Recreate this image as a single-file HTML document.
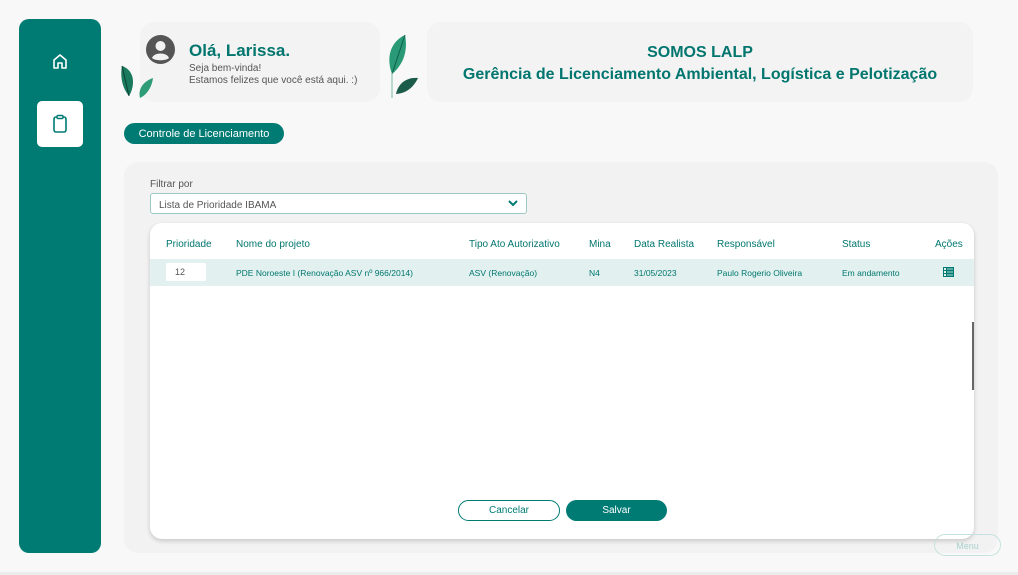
<!DOCTYPE html>
<html><head><meta charset="utf-8"><style>
*{margin:0;padding:0;box-sizing:border-box}
body{width:1018px;height:575px;background:#f8f8f8;font-family:"Liberation Sans",sans-serif;position:relative;overflow:hidden;color:#007a72}
.abs{position:absolute}
.side{left:19px;top:19px;width:82px;height:534px;background:#007b73;border-radius:10px}
.sel{left:37px;top:101px;width:46px;height:46px;background:#fff;border-radius:5px}
.card{background:#f3f3f3;border-radius:14px}
.btn{background:#007b73;color:#fff;border-radius:12px;font-size:11px;text-align:center}
</style></head><body>
<div class="abs" style="left:0;top:572px;width:1018px;height:3px;background:#ececec"></div>
<div class="abs side"></div>
<svg class="abs" style="left:51px;top:52px" width="18" height="18" viewBox="0 0 18 18"><path d="M3 8 L9 3 L15 8 V16 H11 V11 H7 V16 H3 Z" fill="none" stroke="#fff" stroke-width="1.6" stroke-linejoin="round"/></svg>
<div class="abs sel"></div>
<svg class="abs" style="left:51px;top:114px" width="18" height="20" viewBox="0 0 18 20"><rect x="3" y="3" width="12" height="15" rx="2" fill="none" stroke="#007b73" stroke-width="1.6"/><rect x="6" y="1.5" width="6" height="3" rx="1" fill="#fff" stroke="#007b73" stroke-width="1.4"/></svg>

<div class="abs card" style="left:140px;top:22px;width:240px;height:80px"></div>
<svg class="abs" style="left:146px;top:35px" width="29" height="29" viewBox="0 0 29 29"><circle cx="14.5" cy="14.5" r="14.5" fill="#555"/><circle cx="14.5" cy="11" r="5" fill="#f2f2f2"/><path d="M6 23 C8 17 21 17 23 23 C20 26 9 26 6 23Z" fill="#f2f2f2"/></svg>
<div class="abs" style="left:189px;top:41px;font-size:17px;font-weight:bold;color:#00766e">Olá, Larissa.</div>
<div class="abs" style="left:189px;top:63px;font-size:10px;color:#555;line-height:12px">Seja bem-vinda!<br>Estamos felizes que você está aqui. :)</div>
<svg class="abs" style="left:120px;top:62px" width="36" height="38" viewBox="0 0 36 38"><path d="M2 4 C14 8 16 22 9 34 C2 26 0 14 2 4Z" fill="#1a7a5e"/><path d="M2 4 L9 34" stroke="#0c3f34" stroke-width="1"/><path d="M33 16 C22 20 18 28 20 36 C28 32 32 24 33 16Z" fill="#2f9c78"/></svg>
<svg class="abs" style="left:380px;top:34px" width="40" height="64" viewBox="0 0 40 64"><path d="M25 1 C10 8 6 24 12 40 C24 30 28 16 25 1Z" fill="#2a9a76"/><path d="M25 1 L12 40" stroke="#0d5e4a"/><path d="M12 38 V64" stroke="#5aa890" stroke-width="0.8"/><path d="M38 44 C26 43 18 50 16 60 C28 59 34 52 38 44Z" fill="#1a5b4a"/></svg>

<div class="abs card" style="left:427px;top:22px;width:546px;height:80px"></div>
<div class="abs" style="left:427px;top:42px;width:546px;text-align:center;font-size:16px;font-weight:bold;color:#00766e;line-height:22px">SOMOS LALP<br>Gerência de Licenciamento Ambiental, Logística e Pelotização</div>

<div class="abs btn" style="left:124px;top:123px;width:160px;height:21px;line-height:23px">Controle de Licenciamento</div>

<div class="abs card" style="left:124px;top:162px;width:874px;height:391px;background:#f2f2f2"></div>
<div class="abs" style="left:150px;top:179px;font-size:10px;color:#555">Filtrar por</div>
<div class="abs" style="left:150px;top:193px;width:377px;height:21px;background:#fff;border:1px solid #9dc9c4;border-radius:3px;font-size:10px;color:#555;padding:6px 8px 0">Lista de Prioridade IBAMA</div>
<svg class="abs" style="left:508px;top:199px" width="10" height="8" viewBox="0 0 10 8"><path d="M1 2 L5 6 L9 2" stroke="#007b73" stroke-width="2" fill="none"/></svg>

<div class="abs" style="left:150px;top:223px;width:824px;height:316px;background:#fff;border-radius:12px;box-shadow:0 2px 5px rgba(0,0,0,.18)"></div>
<div class="abs" style="left:150px;top:259px;width:824px;height:27px;background:#e2f1ef"></div>
<div class="abs" style="left:972px;top:322px;width:2px;height:68px;background:#666"></div>
<div class="abs" style="top:239px;left:0;width:1018px;font-size:10px;color:#00766e">
<span class="abs" style="left:166px">Prioridade</span><span class="abs" style="left:236px">Nome do projeto</span><span class="abs" style="left:469px">Tipo Ato Autorizativo</span><span class="abs" style="left:589px">Mina</span><span class="abs" style="left:634px">Data Realista</span><span class="abs" style="left:717px">Responsável</span><span class="abs" style="left:842px">Status</span><span class="abs" style="left:935px">Ações</span>
</div>
<div class="abs" style="left:166px;top:263px;width:40px;height:18px;background:#fff;border-radius:2px;font-size:9px;color:#555;padding:4px 9px">12</div>
<div class="abs" style="top:268px;left:0;width:1018px;font-size:8.5px;color:#00766e">
<span class="abs" style="left:236px;white-space:nowrap">PDE Noroeste I (Renovação ASV nº 966/2014)</span><span class="abs" style="left:469px;white-space:nowrap">ASV (Renovação)</span><span class="abs" style="left:589px">N4</span><span class="abs" style="left:634px">31/05/2023</span><span class="abs" style="left:717px;white-space:nowrap">Paulo Rogerio Oliveira</span><span class="abs" style="left:842px;white-space:nowrap">Em andamento</span>
</div>
<svg class="abs" style="left:943px;top:267px" width="11" height="10" viewBox="0 0 11 10"><rect x="0.5" y="0.5" width="10" height="9" fill="none" stroke="#007b73"/><path d="M0.5 3.5H10.5M0.5 6.5H10.5M3.5 0.5V9.5" stroke="#007b73"/><rect x="3.5" y="0.5" width="7" height="9" fill="#007b73" opacity=".6"/></svg>

<div class="abs" style="left:458px;top:500px;width:102px;height:21px;border:1.5px solid #007b73;border-radius:11px;font-size:10px;text-align:center;line-height:20px;color:#007b73;background:#fff">Cancelar</div>
<div class="abs btn" style="left:566px;top:500px;width:101px;height:21px;line-height:22px;font-size:10px">Salvar</div>
<div class="abs" style="left:934px;top:534px;width:67px;height:22px;border:1px solid #c5e2de;border-radius:11px;font-size:9px;text-align:center;line-height:22px;color:#a8d2cc">Menu</div>
</body></html>
